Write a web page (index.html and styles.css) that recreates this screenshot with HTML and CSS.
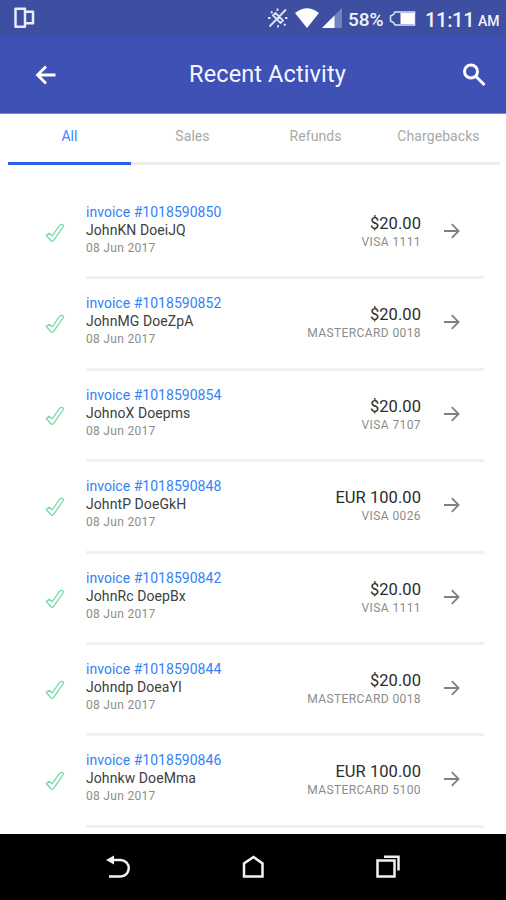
FILE: index.html
```
<!DOCTYPE html>
<html lang="en">
<head>
<meta charset="utf-8">
<title>Recent Activity</title>
<link rel="stylesheet" href="styles.css">
</head>
<body>
<svg width="0" height="0" class="symbols">
  <symbol id="check" viewBox="0 0 20 20"><path d="M1.200 12.500L4 10.300L7.200 12.800L14.800 2Q17.500 .2 18.600 3L8.500 17.600Q7.300 19 6 17.800Z"/></symbol>
  <symbol id="arrow" viewBox="0 0 18 18"><path d="M1 9H15.500M8.800 2.200L15.600 9L8.800 15.800"/></symbol>
</svg>
<div class="phone">
  <div class="status">
    <svg class="outlook" width="22" height="22" viewBox="0 0 22 22"><path d="M2.500 1.800H12V19.700H2.500ZM12 4.800H20V16.200H12Z"/></svg>
    <svg class="vibrate" width="22" height="22" viewBox="0 0 22 22"><path d="M2.500 19.500L19 2.500M6 8.500L8.500 6L16 13.500L13.500 16ZM10.500 1.500V4M4 4.500L5.500 6M1 11H3.500M18 11H20.500M11 18V20.500M17 17L18.500 18.500"/></svg>
    <svg class="wifi" width="24" height="20" viewBox="0 0 24 20"><path d="M0 5Q12-4.500 24 5L12 20Z"/></svg>
    <svg class="signal" width="20" height="20" viewBox="0 0 20 20"><path class="dim" d="M0 20L20 0V20Z"/><path d="M0 20L12.500 7.500V20Z"/></svg>
    <span class="pct">58%</span>
    <svg class="battery" width="27" height="15" viewBox="0 0 27 15"><path class="line" d="M25.500 1H6L4.500 3.500L1.500 5V10L4.500 11.500L6 14H25.500Z"/><path d="M11.500 2H25V13H11.500Z"/></svg>
    <span class="time">11:11</span><span class="ampm">AM</span>
  </div>
  <header class="appbar">
    <svg class="back" width="22" height="20" viewBox="0 0 22 20"><path d="M20.500 10H2.500M11 1.500L2.500 10L11 18.500"/></svg>
    <h1>Recent Activity</h1>
    <svg class="search" width="24" height="24" viewBox="0 0 24 24"><circle cx="9" cy="8.500" r="6.500"/><path d="M13.500 13L22.500 22"/></svg>
  </header>
  <nav class="tabs">
    <span class="tab active">All</span><span class="tab">Sales</span><span class="tab">Refunds</span><span class="tab">Chargebacks</span>
  </nav>
  <main class="list">
    <div class="row"><svg class="check"><use href="#check"/></svg><div class="body"><div class="info"><div class="inv">invoice #1018590850</div><div class="name">JohnKN DoeiJQ</div><div class="date">08 Jun 2017</div></div><div class="pay"><div class="amount">$20.00</div><div class="card">VISA 1111</div></div><svg class="arrow"><use href="#arrow"/></svg></div></div>
    <div class="row"><svg class="check"><use href="#check"/></svg><div class="body"><div class="info"><div class="inv">invoice #1018590852</div><div class="name">JohnMG DoeZpA</div><div class="date">08 Jun 2017</div></div><div class="pay"><div class="amount">$20.00</div><div class="card">MASTERCARD 0018</div></div><svg class="arrow"><use href="#arrow"/></svg></div></div>
    <div class="row"><svg class="check"><use href="#check"/></svg><div class="body"><div class="info"><div class="inv">invoice #1018590854</div><div class="name">JohnoX Doepms</div><div class="date">08 Jun 2017</div></div><div class="pay"><div class="amount">$20.00</div><div class="card">VISA 7107</div></div><svg class="arrow"><use href="#arrow"/></svg></div></div>
    <div class="row"><svg class="check"><use href="#check"/></svg><div class="body"><div class="info"><div class="inv">invoice #1018590848</div><div class="name">JohntP DoeGkH</div><div class="date">08 Jun 2017</div></div><div class="pay"><div class="amount">EUR 100.00</div><div class="card">VISA 0026</div></div><svg class="arrow"><use href="#arrow"/></svg></div></div>
    <div class="row"><svg class="check"><use href="#check"/></svg><div class="body"><div class="info"><div class="inv">invoice #1018590842</div><div class="name">JohnRc DoepBx</div><div class="date">08 Jun 2017</div></div><div class="pay"><div class="amount">$20.00</div><div class="card">VISA 1111</div></div><svg class="arrow"><use href="#arrow"/></svg></div></div>
    <div class="row"><svg class="check"><use href="#check"/></svg><div class="body"><div class="info"><div class="inv">invoice #1018590844</div><div class="name">Johndp DoeaYI</div><div class="date">08 Jun 2017</div></div><div class="pay"><div class="amount">$20.00</div><div class="card">MASTERCARD 0018</div></div><svg class="arrow"><use href="#arrow"/></svg></div></div>
    <div class="row"><svg class="check"><use href="#check"/></svg><div class="body"><div class="info"><div class="inv">invoice #1018590846</div><div class="name">Johnkw DoeMma</div><div class="date">08 Jun 2017</div></div><div class="pay"><div class="amount">EUR 100.00</div><div class="card">MASTERCARD 5100</div></div><svg class="arrow"><use href="#arrow"/></svg></div></div>
  </main>
  <footer class="navbar">
    <svg width="26" height="24" viewBox="0 0 26 24"><path d="M8 5H15.500A8.200 8.200 0 0 1 15.500 21.500H4"/><path class="solid" d="M1 5L9 .5V9.500Z"/></svg>
    <svg width="26" height="24" viewBox="0 0 26 24"><path d="M4 21.500V8.500L13.500 2L22.500 8.500V21.500Z"/></svg>
    <svg width="26" height="24" viewBox="0 0 26 24"><path d="M2.500 5.500H19.500V21.500H2.500ZM9 1.800H23.500V15.500"/></svg>
  </footer>
</div>
</body>
</html>
```
FILE: styles.css
```
* { box-sizing: border-box; }
body { margin: 0; background: #fff; font-family: Roboto, "Liberation Sans", sans-serif; }
.symbols { display: none; }
svg { display: block; flex: none; overflow: visible; fill: none; }
.phone { width: 506px; height: 900px; overflow: hidden; display: flex; flex-direction: column; }
.status { height: 36px; background: #3e4fa1; color: #f1f3fc; display: flex; align-items: center; padding-left: 13px; flex: none; }
.status span { white-space: nowrap; line-height: 36px; padding-top: 3px; }
.outlook { stroke: #e9ecff; stroke-width: 2.500; stroke-linejoin: round; }
.vibrate { stroke: #dfe3f7; stroke-width: 1.800; margin-left: 232px; }
.wifi { fill: #fff; margin-left: 6px; }
.signal { fill: #fff; margin-left: 3px; }
.signal .dim { fill: #7582c2; }
.pct { font-size: 19px; font-weight: 500; letter-spacing: -.1px; width: 36px; margin-left: 6px; }
.battery { fill: #fff; margin-left: 5px; }
.battery .line { fill: none; stroke: #dfe3f7; stroke-width: 1.500; }
.time { font-size: 20px; font-weight: 500; width: 48px; margin-left: 9px; letter-spacing: -.3px; }
.status .ampm { font-size: 14px; font-weight: 500; margin-left: 5px; padding-top: 5px; }
.appbar { height: 78px; flex: none; background: #3f51b5; display: flex; align-items: center; border-bottom: 1px solid #7c88cc; padding: 0 20px 0 35px; }
.back { stroke: #fff; stroke-width: 2.800; }
.appbar h1 { flex: 1; margin: 0; text-align: center; color: #f5f6ff; font-size: 23.500px; font-weight: 400; line-height: 30px; letter-spacing: .12px; padding: 0 0 2px 16px; }
.search { stroke: #fff; stroke-width: 3; }
.tabs { height: 51px; flex: none; margin: 0 6px 0 8px; display: grid; grid-template-columns: repeat(4, 1fr); }
.tab { font-size: 14px; line-height: 45px; text-align: center; color: #a8a8a8; border-bottom: 3px solid #eee; letter-spacing: .08px; }
.tab.active { color: #4285f4; border-color: #2962e8; }
.list { padding: 23px 22px 0 45px; flex: 1; overflow: hidden; }
.row { height: 91.420px; display: flex; }
.check { width: 20px; height: 20px; margin-top: 35px; margin-right: 21px; stroke: #74d8a9; stroke-width: 1.300; stroke-linejoin: round; }
.body { flex: 1; display: flex; border-bottom: 3px solid #f0f0f0; }
.info { flex: 1; padding-top: 15px; }
.inv { font-size: 14px; line-height: 18px; color: #3482f6; letter-spacing: .03px; }
.name { font-size: 14px; line-height: 19px; color: #404040; letter-spacing: .08px; }
.date { font-size: 12px; line-height: 17px; color: #8c8c8c; letter-spacing: .3px; }
.pay { text-align: right; padding-top: 26px; }
.amount { font-size: 16.500px; line-height: 20px; color: #2c2c2c; letter-spacing: .05px; }
.card { font-size: 12px; line-height: 17px; color: #8c8c8c; letter-spacing: .4px; }
.arrow { width: 18px; height: 18px; margin: 34px 23px 0 22px; stroke: #808080; stroke-width: 1.800; }
.navbar { height: 66px; flex: none; background: #000; display: flex; justify-content: center; gap: 109px; align-items: center; }
.navbar svg { stroke: #f2f2f2; stroke-width: 2.500; }
.navbar .solid { fill: #f2f2f2; stroke: none; }
```
